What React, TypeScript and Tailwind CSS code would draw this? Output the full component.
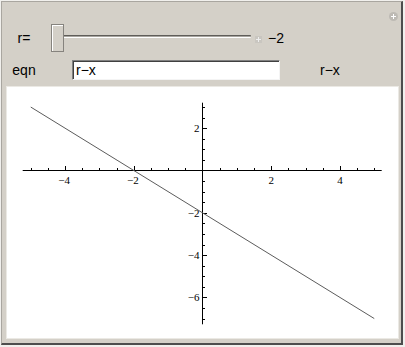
import React from "react";

const OX = 202.5;
const OY = 170.5;
const SX = 34.35;
const SY = 21.15;

const px = (v: number) => OX + v * SX;
const py = (v: number) => OY - v * SY;

function range(a: number, b: number, s: number) {
  const out: number[] = [];
  for (let v = a; v <= b + 1e-9; v += s) out.push(Math.round(v * 10) / 10);
  return out;
}

function fmt(v: number) {
  return v < 0 ? "\u2212" + Math.abs(v) : String(v);
}

function Plot() {
  const xt = range(-5, 5, 0.5).filter((v) => v !== 0);
  const yt = range(-7, 3, 0.5).filter((v) => v !== 0);
  const xMaj = [-4, -2, 2, 4];
  const yMaj = [-6, -4, -2, 2];
  return (
    <svg width={391} height={251} viewBox="7 87 391 251" className="block">
      <line x1={22.7} y1={OY} x2={381.7} y2={OY} stroke="#000" strokeWidth={1} />
      <line x1={OX} y1={102.7} x2={OX} y2={324.3} stroke="#000" strokeWidth={1} />
      {xt.map((v) => {
        const maj = xMaj.includes(v);
        const x = Math.round(px(v)) + 0.5;
        return (
          <line
            key={"xt" + v}
            x1={x}
            y1={OY}
            x2={x}
            y2={OY - (maj ? 4.5 : 2.5)}
            stroke="#000"
            strokeWidth={1}
          />
        );
      })}
      {yt.map((v) => {
        const maj = yMaj.includes(v);
        const y = Math.round(py(v)) + 0.5;
        return (
          <line
            key={"yt" + v}
            x1={OX}
            y1={y}
            x2={OX + (maj ? 4.5 : 2.5)}
            y2={y}
            stroke="#000"
            strokeWidth={1}
          />
        );
      })}
      {xMaj.map((v) => (
        <text
          key={"xl" + v}
          x={px(v) - (v < 0 ? 1 : 0)}
          y={184}
          textAnchor="middle"
          fontFamily="'Liberation Serif', serif"
          fontSize={11}
          fill="#000"
        >
          {fmt(v)}
        </text>
      ))}
      {yMaj.map((v) => (
        <text
          key={"yl" + v}
          x={199.5}
          y={py(v) + 3.8}
          textAnchor="end"
          fontFamily="'Liberation Serif', serif"
          fontSize={11}
          fill="#000"
        >
          {fmt(v)}
        </text>
      ))}
      <line x1={px(-5)} y1={py(3)} x2={px(5)} y2={py(-7)} stroke="#5c5c5c" strokeWidth={1} />
    </svg>
  );
}

export default function App() {
  return (
    <div
      className="w-[405px] h-[347px] bg-[#f1f0ed] pl-px pt-px"
      style={{ fontFamily: "'Liberation Sans', Arial, sans-serif" }}
    >
      <div className="relative w-[402px] h-[344px] bg-[#d4d0c8] border-l border-t border-l-[#a9a6a0] border-t-[#a9a6a0] border-r-2 border-b-2 border-r-[#4d4d4d] border-b-[#4d4d4d] flex flex-col">
        {/* top-right options icon */}
        <div className="absolute left-[387px] top-[10px] w-[9px] h-[9px] rounded-full bg-[#bdbab4] flex items-center justify-center">
          <div className="relative w-[5px] h-[5px]">
            <div className="absolute left-[2px] top-0 w-px h-[5px] bg-white" />
            <div className="absolute left-0 top-[2px] w-[5px] h-px bg-white" />
          </div>
        </div>

        {/* Row 1: slider */}
        <div className="mt-[22px] h-[28px] flex items-center text-[14px] text-black">
          <div className="ml-[6px] w-[32px] text-center leading-none">r=</div>
          <div className="relative ml-[11px] w-[200px] h-[28px]">
            <div className="absolute left-0 right-0 top-[11px] h-[3px] border-t border-[#5f5d59] bg-[#a8a59f] border-b border-b-white rounded-r-[1px]" />
            <div className="absolute left-0 top-0 w-[13px] h-[28px] bg-[#d4d0c8] border border-[#86837e] shadow-[inset_1px_1px_0_#ffffff]" />
          </div>
          <div className="ml-[4px] mt-[2px] w-[7px] h-[7px] bg-[#c9c6c0] flex items-center justify-center">
            <div className="relative w-[5px] h-[5px]">
              <div className="absolute left-[2px] top-0 w-px h-[5px] bg-[#eeeeee]" />
              <div className="absolute left-0 top-[2px] w-[5px] h-px bg-[#eeeeee]" />
            </div>
          </div>
          <div className="ml-[6px] leading-none">{"\u22122"}</div>
        </div>

        {/* Row 2: input */}
        <div className="mt-[8px] h-[20px] flex items-center text-[14px] text-black">
          <div className="ml-[6px] w-[32px] text-center leading-none">eqn</div>
          <div className="ml-[32px] w-[208px] h-[20px] bg-white border border-t-[#808080] border-l-[#808080] border-b-[#f4f4f4] border-r-[#f4f4f4] shadow-[inset_1px_1px_0_#404040] flex items-center pl-[3px] leading-none">
            {"r\u2212x"}
          </div>
          <div className="ml-[40px] leading-none">{"r\u2212x"}</div>
        </div>

        {/* Plot area */}
        <div className="mt-[6px] ml-[4px] w-[393px] h-[253px] border border-[#ebe9e4] bg-white">
          <Plot />
        </div>
      </div>
    </div>
  );
}
